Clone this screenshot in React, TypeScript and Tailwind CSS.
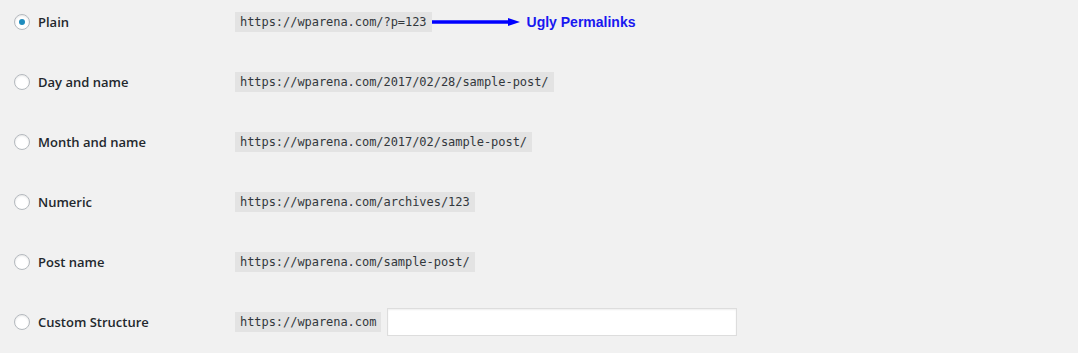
import { useState } from 'react';

// Permalink settings · common structures list (WP admin look)
const OPTIONS = [
  { id: 'plain', label: 'Plain', code: 'https://wparena.com/?p=123' },
  { id: 'day', label: 'Day and name', code: 'https://wparena.com/2017/02/28/sample-post/' },
  { id: 'month', label: 'Month and name', code: 'https://wparena.com/2017/02/sample-post/' },
  { id: 'numeric', label: 'Numeric', code: 'https://wparena.com/archives/123' },
  { id: 'post', label: 'Post name', code: 'https://wparena.com/sample-post/' },
  { id: 'custom', label: 'Custom Structure', code: 'https://wparena.com' },
];

export default function App() {
  const [selected, setSelected] = useState('plain');
  return (
    <div className="w-[1078px] h-[353px] bg-[#f1f1f1] overflow-hidden pt-[12px] pl-[14px] flex flex-col gap-[40px] font-['Open_Sans','Noto_Sans',sans-serif]">
      {OPTIONS.map((o) => (
        <div key={o.id} className="h-[20px] flex items-center">
          <label className="w-[221px] flex items-center gap-[8px] cursor-pointer" onClick={() => setSelected(o.id)}>
            <Radio checked={selected === o.id} />
            <span className="text-[13px] font-semibold text-[#23282d] leading-none">{o.label}</span>
          </label>
          <code className="h-[20px] flex items-center px-[5px] bg-[#e3e3e3] text-[#32373c] text-[12px] font-['DejaVu_Sans_Mono',monospace] tracking-[-0.05px]">
            {o.code}
          </code>
          {o.id === 'plain' && (
            <div className="flex items-center">
              <Arrow />
              <span className="ml-[7px] text-[14px] font-bold text-[#1818f0] font-['Liberation_Sans',Arial,sans-serif]">Ugly Permalinks</span>
            </div>
          )}
          {o.id === 'custom' && (
            <input className="ml-[6px] w-[350px] h-[28px] bg-white border border-[#dddddd] shadow-[inset_0_1px_2px_rgba(0,0,0,0.07)] outline-none" />
          )}
        </div>
      ))}
    </div>
  );
}

function Radio({ checked }: { checked: boolean }) {
  return (
    <span className="w-[16px] h-[16px] rounded-full bg-white border border-[#b4b9be] shadow-[inset_0_1px_2px_rgba(0,0,0,0.1)] grid place-items-center">
      {checked && <span className="w-[6px] h-[6px] rounded-full bg-[#1e8cbe]" />}
    </span>
  );
}

function Arrow() {
  return (
    <svg width="88" height="10" viewBox="0 0 88 10">
      <line x1="0" y1="5" x2="78" y2="5" stroke="#0000ff" strokeWidth="3.5" />
      <polygon points="76,1 88,5 76,9" fill="#0000ff" />
    </svg>
  );
}
